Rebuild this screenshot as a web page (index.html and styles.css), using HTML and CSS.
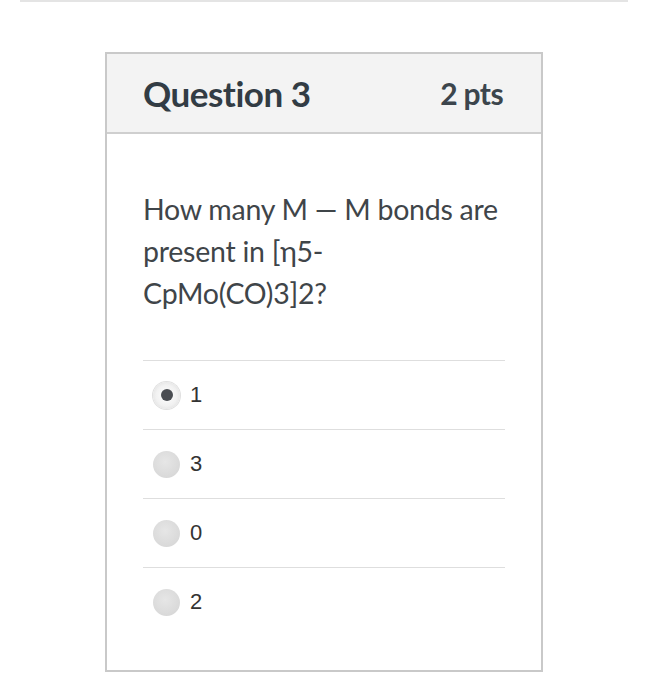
FILE: index.html
```html
<!DOCTYPE html>
<html>
<head>
<meta charset="utf-8">
<link rel="stylesheet" href="styles.css">
</head>
<body>
<div class="topline"></div>
<div class="card">
  <div class="card-header">
    <span class="title">Question 3</span>
    <span class="pts">2 pts</span>
  </div>
  <div class="card-body">
    <p class="question">How many M — M bonds are present in [η5-CpMo(CO)3]2?</p>
    <ul class="answers">
      <li class="answer"><span class="radio checked"></span><span class="label">1</span></li>
      <li class="answer"><span class="radio"></span><span class="label">3</span></li>
      <li class="answer"><span class="radio"></span><span class="label">0</span></li>
      <li class="answer"><span class="radio"></span><span class="label">2</span></li>
    </ul>
  </div>
</div>
</body>
</html>
```
FILE: styles.css
```css
html, body {
  margin: 0;
  padding: 0;
  background: #ffffff;
}
body {
  font-family: Lato, "Open Sans", sans-serif;
  color: #2d3b45;
}
.topline {
  margin-left: 20px;
  width: 608px;
  height: 2px;
  background: #e4e4e4;
}
.card {
  margin-top: 50px;
  margin-left: 105px;
  width: 434px;
  border: 2px solid #c9c9c9;
  background: #fff;
}
.card-header {
  height: 80px;
  box-sizing: border-box;
  padding: 0 38px 0 36px;
  display: flex;
  align-items: center;
  justify-content: space-between;
  background: #f3f3f3;
  border-bottom: 2px solid #cfcfcf;
}
.title {
  font-size: 35px;
  font-weight: 700;
  color: #323c44;
  letter-spacing: -0.5px;
}
.pts {
  font-size: 30px;
  font-weight: 700;
  color: #3c454c;
  letter-spacing: -0.6px;
}
.card-body {
  padding: 54px 36px 34px 36px;
}
.question {
  margin: 0 0 46px 0;
  width: 358px;
  font-size: 28.5px;
  line-height: 42px;
  color: #3f4549;
  letter-spacing: -0.25px;
}
.answers {
  list-style: none;
  margin: 0;
  padding: 0;
}
.answer {
  height: 68px;
  border-top: 1.5px solid #dedede;
  display: flex;
  align-items: center;
  padding-left: 10px;
  gap: 10px;
}
.radio {
  width: 27px;
  height: 27px;
  border-radius: 50%;
  background: radial-gradient(circle at 45% 40%, #e6e6e6 0%, #d9d9d9 70%, #cfcfcf 100%);
  display: flex;
  align-items: center;
  justify-content: center;
}
.radio.checked {
  background: radial-gradient(circle, #ffffff 0%, #f1f1f1 55%, #d6d6d6 100%);
  box-shadow: 0 0 0 1px #e0e0e0;
}
.radio.checked::after {
  content: "";
  width: 12px;
  height: 12px;
  border-radius: 50%;
  background: #4a4d52;
}
.label {
  font-family: "Liberation Sans", Arial, sans-serif;
  font-size: 22px;
  color: #333;
}
```
